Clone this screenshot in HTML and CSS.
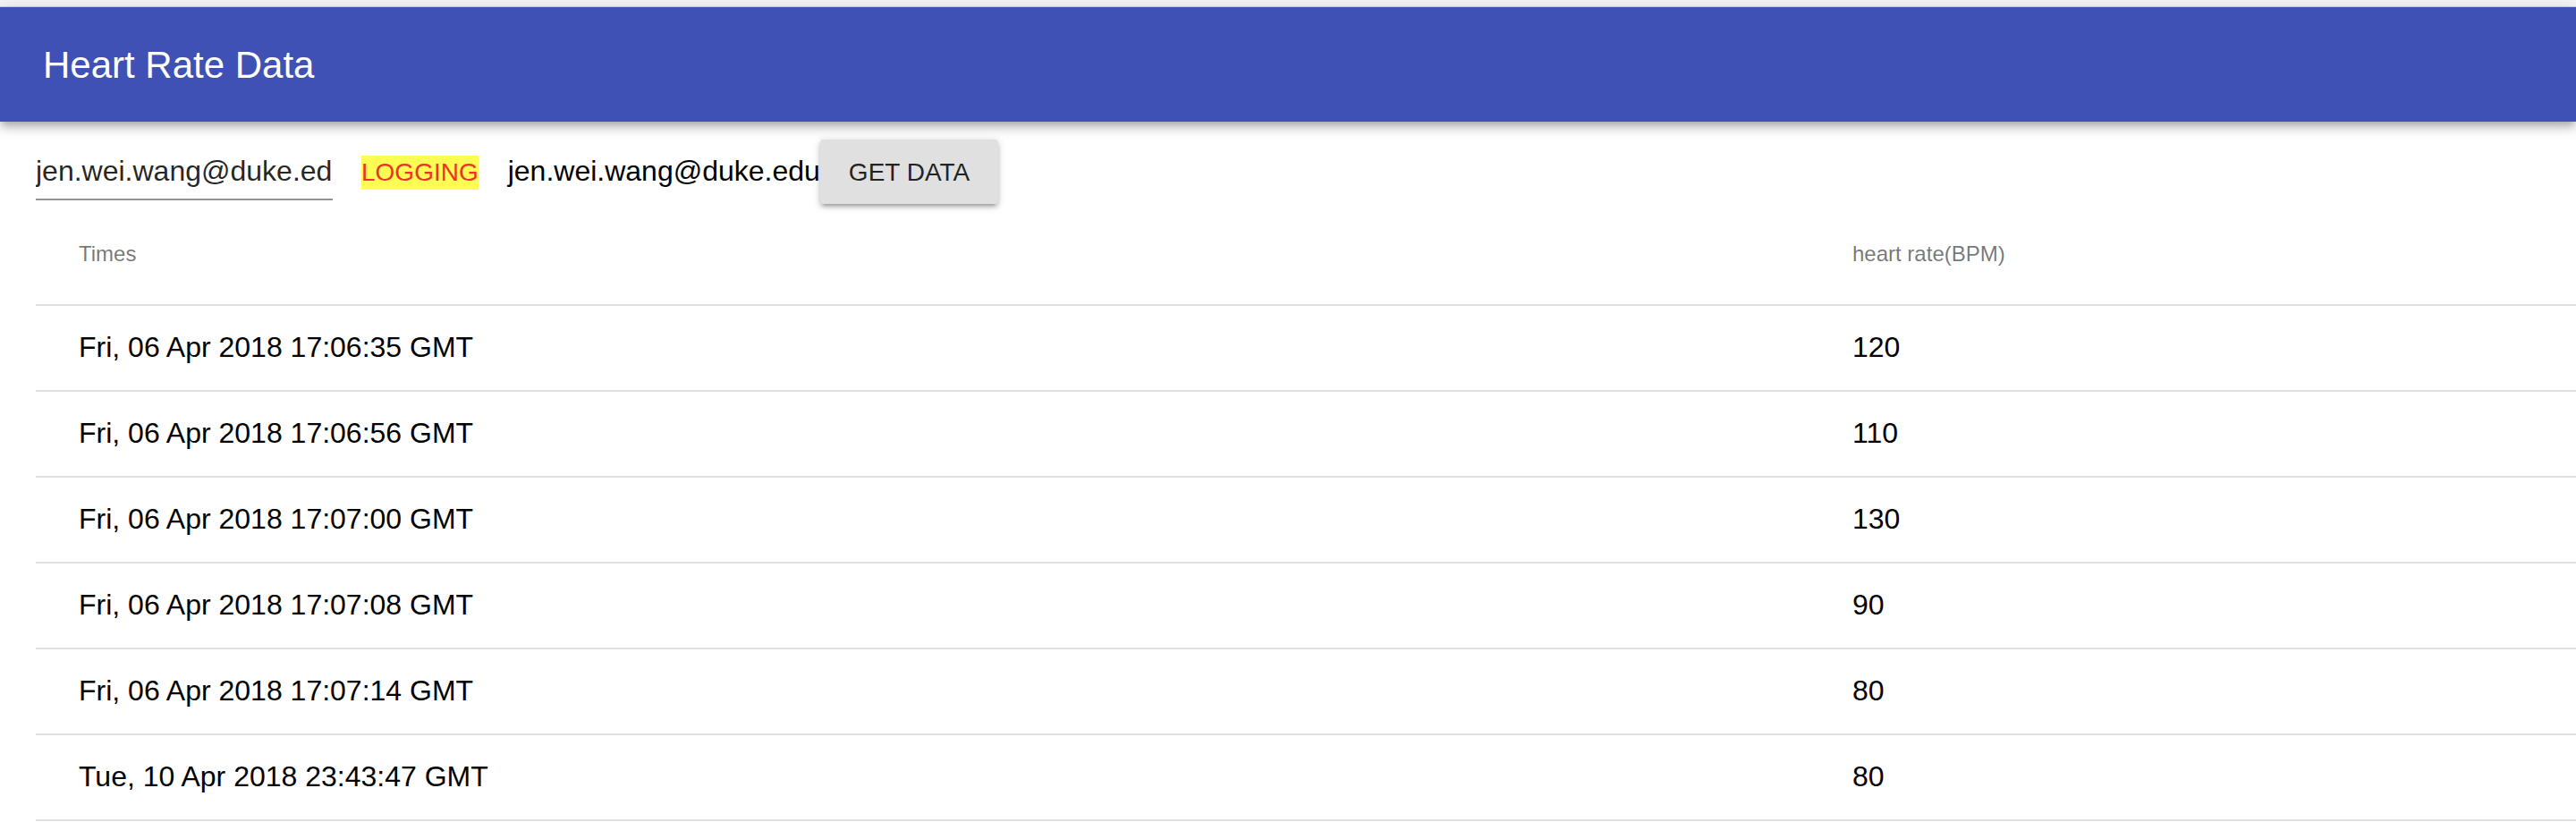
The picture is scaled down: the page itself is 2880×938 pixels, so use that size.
FILE: index.html
```html
<!DOCTYPE html>
<html lang="en">
<head>
<meta charset="utf-8">
<title>Heart Rate Data</title>
<link rel="stylesheet" href="styles.css">
</head>
<body>
  <div class="top-strip"></div>
  <header class="app-bar">
    <h1 class="app-title">Heart Rate Data</h1>
  </header>
  <main class="content">
    <div class="controls">
      <div class="field">
        <input class="field-input" type="text" value="jen.wei.wang@duke.edu">
      </div>
      <span class="status">LOGGING</span>
      <span class="current-email">jen.wei.wang@duke.edu</span>
      <button class="btn" type="button">GET DATA</button>
    </div>
    <table class="data-table">
      <colgroup>
        <col class="col-time">
        <col class="col-rate">
      </colgroup>
      <thead>
        <tr class="head-row">
          <th>Times</th>
          <th>heart rate(BPM)</th>
        </tr>
      </thead>
      <tbody>
        <tr class="body-row"><td>Fri, 06 Apr 2018 17:06:35 GMT</td><td>120</td></tr>
        <tr class="body-row"><td>Fri, 06 Apr 2018 17:06:56 GMT</td><td>110</td></tr>
        <tr class="body-row"><td>Fri, 06 Apr 2018 17:07:00 GMT</td><td>130</td></tr>
        <tr class="body-row"><td>Fri, 06 Apr 2018 17:07:08 GMT</td><td>90</td></tr>
        <tr class="body-row"><td>Fri, 06 Apr 2018 17:07:14 GMT</td><td>80</td></tr>
        <tr class="body-row"><td>Tue, 10 Apr 2018 23:43:47 GMT</td><td>80</td></tr>
      </tbody>
    </table>
  </main>
</body>
</html>
```
FILE: styles.css
```css
* {
  box-sizing: border-box;
}

html, body {
  margin: 0;
  padding: 0;
  background: #ffffff;
  font-family: "Liberation Sans", Arial, Helvetica, sans-serif;
  overflow: hidden;
}

.top-strip {
  height: 8px;
  background: #f5f5f5;
  border-bottom: 1px solid #d6d6d6;
}

.app-bar {
  position: relative;
  z-index: 2;
  height: 128px;
  display: flex;
  align-items: center;
  padding: 0 48px;
  background: #3f51b5;
  box-shadow: 0 4px 8px -2px rgba(0, 0, 0, 0.2),
              0 8px 10px 0 rgba(0, 0, 0, 0.14),
              0 2px 20px 0 rgba(0, 0, 0, 0.12);
}

.app-title {
  margin: 0;
  color: #ffffff;
  font-size: 42px;
  font-weight: 400;
  line-height: 49px;
}

.content {
  padding-left: 40px;
}

.controls {
  display: flex;
  align-items: baseline;
  padding-top: 20px;
  height: 94px;
}

.field {
  width: 332px;
  border-bottom: 2px solid rgba(0, 0, 0, 0.42);
  margin-right: 32px;
}

.field-input {
  display: block;
  width: 100%;
  border: 0;
  outline: none;
  margin: 0;
  padding: 12px 0 12px;
  background: transparent;
  font-family: inherit;
  font-size: 32px;
  line-height: 38px;
  height: 62px;
  color: rgba(0, 0, 0, 0.87);
}

.status {
  display: inline-block;
  font-size: 28px;
  line-height: 38px;
  color: #ee3226;
  background: #fffd54;
  margin-right: 33px;
}

.current-email {
  font-size: 32px;
  color: #000000;
}

.btn {
  display: inline-flex;
  align-items: center;
  justify-content: center;
  min-width: 176px;
  min-height: 72px;
  padding: 16px 32px;
  border: 0;
  border-radius: 4px;
  background: #e0e0e0;
  color: rgba(0, 0, 0, 0.87);
  font-family: inherit;
  font-size: 28px;
  line-height: 39px;
  box-shadow: 0 2px 10px 0 rgba(0, 0, 0, 0.2),
              0 4px 4px 0 rgba(0, 0, 0, 0.14),
              0 6px 2px -4px rgba(0, 0, 0, 0.12);
}

.data-table {
  width: 2840px;
  table-layout: fixed;
  border-collapse: separate;
  border-spacing: 0;
}

.col-time {
  width: 1983px;
}

.data-table th,
.data-table td {
  padding: 0 112px 2px 48px;
  text-align: left;
  vertical-align: middle;
  border-bottom: 2px solid #e0e0e0;
}

.head-row {
  height: 112px;
}

.data-table th {
  font-size: 24px;
  font-weight: 400;
  color: rgba(0, 0, 0, 0.54);
}

.body-row {
  height: 96px;
}

.data-table td {
  font-size: 32px;
  color: #000000;
}
```
